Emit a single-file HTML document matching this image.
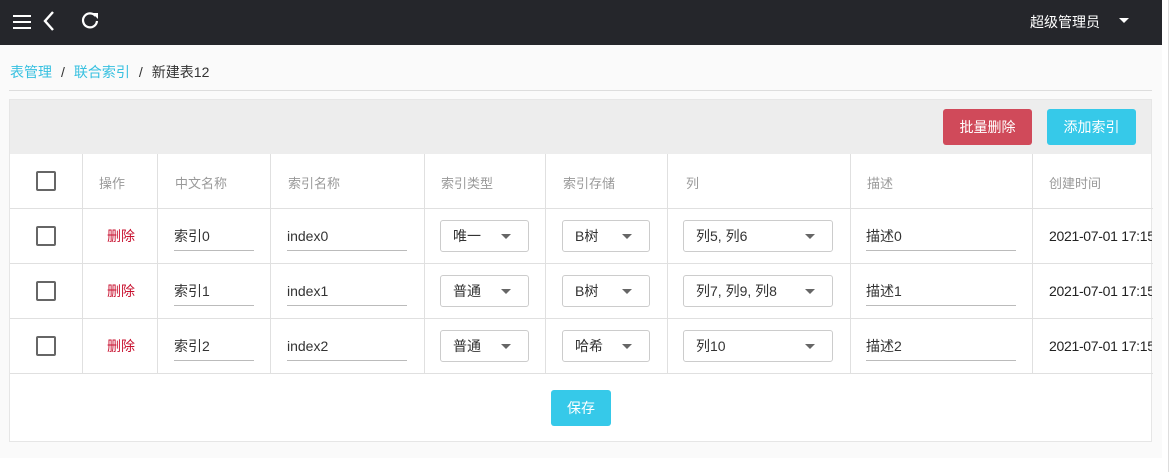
<!DOCTYPE html>
<html><head><meta charset="utf-8"><style>
*{box-sizing:border-box;margin:0;padding:0}
body{width:1174px;height:472px;background:#fff;font-family:"Liberation Sans","Noto Sans CJK SC",sans-serif;font-size:14px;color:#333;position:relative;overflow:hidden}
.top{position:absolute;left:0;top:0;width:1162px;height:45px;background:#25262b;color:#fff}
.main{position:absolute;left:0;top:45px;width:1162px;height:413px;background:#fafafa}
.rs{position:absolute;left:1168px;top:0;width:1px;height:472px;background:#ddd}
.abs{position:absolute}
.card{position:absolute;left:9px;top:99px;width:1143px;height:343px;background:#fff;border:1px solid #e6e6e6}
.tb{position:absolute;left:0;top:0;width:100%;height:54px;background:#ededed}
.btn{position:absolute;height:36px;border-radius:3px;color:#fff;font-size:14px;line-height:36px;text-align:center}
.hl{position:absolute;left:0;width:1143px;height:1px;background:#e0e0e0}
.vl{position:absolute;top:54px;width:1px;height:220px;background:#e0e0e0}
.cb{position:absolute;width:20px;height:20px;border:2px solid #666;border-radius:2px}
.th{position:absolute;font-size:13px;color:#999}
.ul{position:absolute;height:29px;border-bottom:1px solid #bbb;font-size:14px;line-height:29px;color:#333}
.sel{position:absolute;height:32px;border:1px solid #ccc;border-radius:3px;font-size:14px;line-height:30px;padding-left:12px;color:#333}
.sel:after{content:"";position:absolute;right:17px;top:13px;border-left:5px solid transparent;border-right:5px solid transparent;border-top:5px solid #666}
.del{position:absolute;color:#c8102e;font-size:14px}
.dt{position:absolute;font-size:14px;color:#222;white-space:nowrap;overflow:hidden}
</style></head><body>
<div class="top">
<svg class="abs" style="left:12px;top:12px" width="20" height="20" viewBox="0 0 20 20"><path d="M1 4h18M1 10h18M1 16h18" stroke="#fff" stroke-width="2"/></svg>
<svg class="abs" style="left:42px;top:10px" width="14" height="22" viewBox="0 0 14 22"><path d="M11 2L3 11l8 9" stroke="#fff" stroke-width="2.4" fill="none"/></svg>
<svg class="abs" style="left:80px;top:10px" width="20" height="20" viewBox="0 0 20 20"><path d="M15.5 6A7 7 0 1 0 17 11" stroke="#fff" stroke-width="2.2" fill="none"/><path d="M12 3h6v6z" fill="#fff"/></svg>
<div class="abs" style="left:1030px;top:12px;font-size:14px;color:#fff">超级管理员</div>
<div class="abs" style="left:1119px;top:18px;border-left:5px solid transparent;border-right:5px solid transparent;border-top:5px solid #fff"></div>
</div>
<div class="main"></div>
<div class="rs"></div>
<div class="abs" style="left:10px;top:62px;font-size:14px"><span style="color:#36c0e0">表管理</span><span style="margin:0 9px">/</span><span style="color:#36c0e0">联合索引</span><span style="margin:0 9px">/</span><span>新建表12</span></div>
<div class="abs" style="left:9px;top:90px;width:1143px;height:1px;background:#ddd"></div>
<div class="card">
<div class="tb"></div>
<div class="btn" style="left:933px;top:9px;width:89px;background:#d04a5a">批量删除</div>
<div class="btn" style="left:1037px;top:9px;width:89px;background:#36c9e9">添加索引</div>
<div class="hl" style="top:108px"></div><div class="hl" style="top:163px"></div><div class="hl" style="top:218px"></div><div class="hl" style="top:273px"></div>
<div class="vl" style="left:72px"></div><div class="vl" style="left:147px"></div><div class="vl" style="left:260px"></div><div class="vl" style="left:414px"></div><div class="vl" style="left:535px"></div><div class="vl" style="left:657px"></div><div class="vl" style="left:840px"></div><div class="vl" style="left:1022px"></div>
<div class="cb" style="left:26px;top:71px"></div>
<div class="th" style="left:89px;top:73px">操作</div>
<div class="th" style="left:165px;top:73px">中文名称</div>
<div class="th" style="left:278px;top:73px">索引名称</div>
<div class="th" style="left:431px;top:73px">索引类型</div>
<div class="th" style="left:553px;top:73px">索引存储</div>
<div class="th" style="left:676px;top:73px">列</div>
<div class="th" style="left:857px;top:73px">描述</div>
<div class="th" style="left:1039px;top:73px">创建时间</div>

<div class="cb" style="left:26px;top:126px"></div><div class="del" style="left:97px;top:126px">删除</div>
<div class="ul" style="left:164px;top:122px;width:80px">索引0</div><div class="ul" style="left:277px;top:122px;width:120px">index0</div>
<div class="sel" style="left:430px;top:120px;width:89px">唯一</div><div class="sel" style="left:552px;top:120px;width:88px">B树</div><div class="sel" style="left:673px;top:120px;width:150px">列5, 列6</div>
<div class="ul" style="left:856px;top:122px;width:150px">描述0</div><div class="dt" style="left:1039px;top:128px;width:103px;letter-spacing:-0.3px">2021-07-01 17:15</div>

<div class="cb" style="left:26px;top:181px"></div><div class="del" style="left:97px;top:181px">删除</div>
<div class="ul" style="left:164px;top:177px;width:80px">索引1</div><div class="ul" style="left:277px;top:177px;width:120px">index1</div>
<div class="sel" style="left:430px;top:175px;width:89px">普通</div><div class="sel" style="left:552px;top:175px;width:88px">B树</div><div class="sel" style="left:673px;top:175px;width:150px">列7, 列9, 列8</div>
<div class="ul" style="left:856px;top:177px;width:150px">描述1</div><div class="dt" style="left:1039px;top:183px;width:103px;letter-spacing:-0.3px">2021-07-01 17:15</div>

<div class="cb" style="left:26px;top:236px"></div><div class="del" style="left:97px;top:236px">删除</div>
<div class="ul" style="left:164px;top:232px;width:80px">索引2</div><div class="ul" style="left:277px;top:232px;width:120px">index2</div>
<div class="sel" style="left:430px;top:230px;width:89px">普通</div><div class="sel" style="left:552px;top:230px;width:88px">哈希</div><div class="sel" style="left:673px;top:230px;width:150px">列10</div>
<div class="ul" style="left:856px;top:232px;width:150px">描述2</div><div class="dt" style="left:1039px;top:238px;width:103px;letter-spacing:-0.3px">2021-07-01 17:15</div>

<div class="btn" style="left:541px;top:290px;width:60px;background:#36c9e9">保存</div>
</div>
</body></html>
